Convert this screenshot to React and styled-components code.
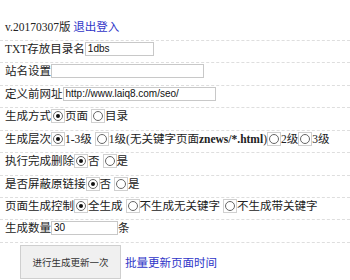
import styled, { createGlobalStyle } from "styled-components";

const GlobalStyle = createGlobalStyle`
  html, body {
    margin: 0;
    padding: 0;
    background: #fff;
  }
  body {
    font-family: "Liberation Serif", "Noto Sans CJK SC", serif;
    font-size: 11.5px;
    color: #222;
  }
`;

const Panel = styled.div`
  padding-top: 18.5px;
  width: 350px;
`;

const Row = styled.div`
  box-sizing: border-box;
  height: 22.44px;
  padding: 1px 0 0 5px;
  display: flex;
  align-items: flex-start;
  line-height: 14px;
  white-space: nowrap;
  border-bottom: 1px dashed #dedede;
`;

const Label = styled.span`
  line-height: 14px;
`;

const Path = styled.span`
  font-weight: bold;
`;

const Link = styled.a`
  color: #2f35c8;
  text-decoration: none;
  cursor: pointer;
`;

const TextInput = styled.span`
  box-sizing: border-box;
  display: inline-flex;
  align-items: center;
  width: ${(p) => p.$w}px;
  height: 14px;
  padding-left: 2px;
  border: 1px solid #c8c8c8;
  font-family: "Liberation Sans", Arial, sans-serif;
  font-size: 10px;
  color: #111;
`;

const RadioBox = styled.span`
  box-sizing: border-box;
  display: inline-flex;
  align-items: center;
  justify-content: center;
  width: 14px;
  height: 14px;
  margin-left: ${(p) => (p.$gap ? 3 : 0)}px;
  border: 1px solid #d0d0d0;
`;

const RadioDot = styled.span`
  box-sizing: border-box;
  width: 10px;
  height: 10px;
  border-radius: 50%;
  border: 1px solid #666;
  display: flex;
  align-items: center;
  justify-content: center;
  &::after {
    content: "";
    width: 4px;
    height: 4px;
    border-radius: 50%;
    background: ${(p) => (p.$on ? "#111" : "transparent")};
  }
`;

const Radio = ({ on, gap }) => (
  <RadioBox $gap={gap}>
    <RadioDot $on={on} />
  </RadioBox>
);

const Footer = styled.div`
  display: flex;
  align-items: center;
  padding: 2px 0 0 20px;
  gap: 4px;
`;

const Button = styled.button`
  width: 101px;
  height: 34px;
  background: #f0f0f0;
  border: 1px solid #cfcfcf;
  font-family: "Noto Sans CJK SC", sans-serif;
  font-size: 9.5px;
  color: #333;
  padding: 0;
`;

const App = () => {
  return (
    <Panel>
      <GlobalStyle />
      <Row>
        <Label>v.20170307版&nbsp;</Label>
        <Link>退出登入</Link>
      </Row>
      <Row>
        <Label>TXT存放目录名</Label>
        <TextInput $w={69}>1dbs</TextInput>
      </Row>
      <Row>
        <Label>站名设置</Label>
        <TextInput $w={153} />
      </Row>
      <Row>
        <Label>定义前网址</Label>
        <TextInput $w={153}>http://www.laiq8.com/seo/</TextInput>
      </Row>
      <Row>
        <Label>生成方式</Label>
        <Radio on />
        <Label>页面</Label>
        <Radio gap />
        <Label>目录</Label>
      </Row>
      <Row>
        <Label>生成层次</Label>
        <Radio on />
        <Label>1-3级</Label>
        <Radio gap />
        <Label>
          1级(无关键字页面<Path>znews/*.html</Path>)
        </Label>
        <Radio />
        <Label>2级</Label>
        <Radio />
        <Label>3级</Label>
      </Row>
      <Row>
        <Label>执行完成删除</Label>
        <Radio on />
        <Label>否</Label>
        <Radio gap />
        <Label>是</Label>
      </Row>
      <Row>
        <Label>是否屏蔽原链接</Label>
        <Radio on />
        <Label>否</Label>
        <Radio gap />
        <Label>是</Label>
      </Row>
      <Row>
        <Label>页面生成控制</Label>
        <Radio on />
        <Label>全生成</Label>
        <Radio gap />
        <Label>不生成无关键字</Label>
        <Radio gap />
        <Label>不生成带关键字</Label>
      </Row>
      <Row>
        <Label>生成数量</Label>
        <TextInput $w={67}>30</TextInput>
        <Label>条</Label>
      </Row>
      <Footer>
        <Button>进行生成更新一次</Button>
        <Link>批量更新页面时间</Link>
      </Footer>
    </Panel>
  );
};

export default App;
